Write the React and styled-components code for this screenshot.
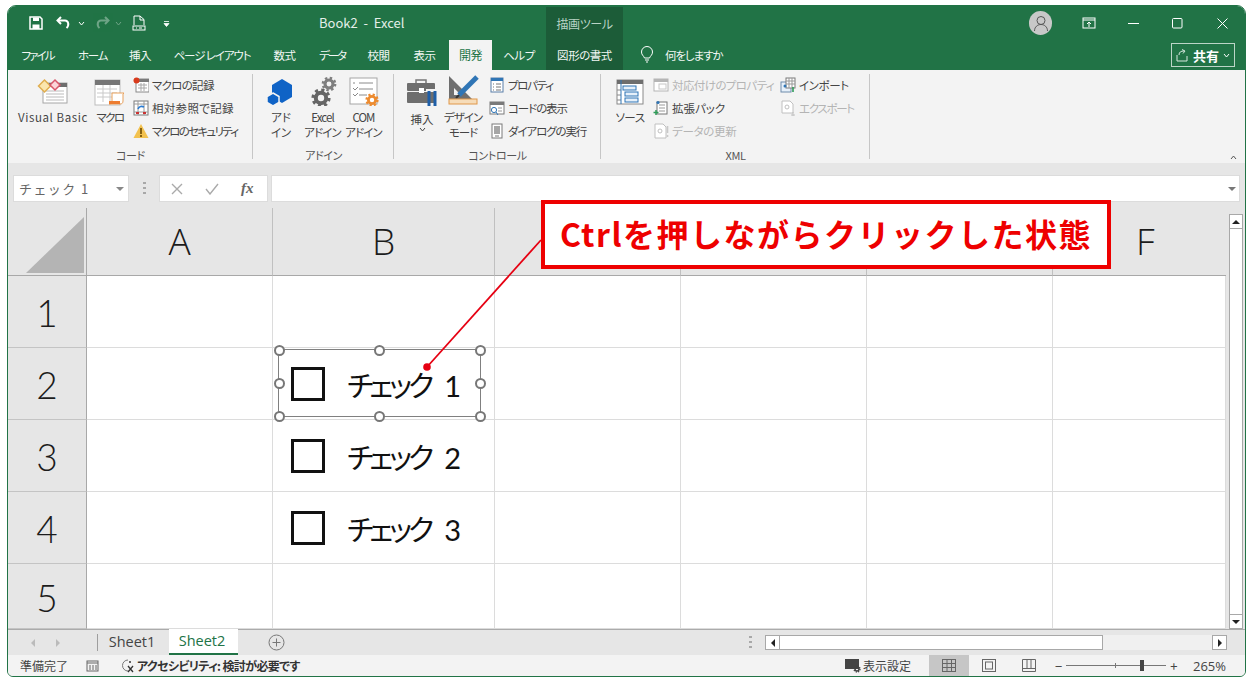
import React from "react";
import styled, { createGlobalStyle } from "styled-components";

const Global = createGlobalStyle`
    html, body { margin: 0; padding: 0; background: #fff; }
    body {
        font-family: "Noto Sans CJK JP", "Noto Sans", sans-serif;
        font-feature-settings: "palt";
        overflow: hidden;
    }
    * { box-sizing: border-box; }
`;

const tabs = [
    ["ファイル", 21, 33, -1.9], ["ホーム", 78, 29, -1.3], ["挿入", 128, 24, -0.45], ["ページ レイアウト", 173, 78, -1.1],
    ["数式", 273, 23, -0.45], ["データ", 318, 28, -2.2], ["校閲", 367, 23, -0.45], ["表示", 413, 23, -0.45],
];

const Svg = ({ w = 16, h = 16, children, vb }) => (
    <svg width={w} height={h} viewBox={vb || `0 0 ${w} ${h}`} fill="none" style={{ flex: "none", display: "block" }}>{children}</svg>
);

/* ---------- ribbon icons ---------- */
const VbIcon = () => (
    <Svg w={32} h={32}>
        <rect x="6" y="9" width="24" height="20" fill="#fff" stroke="#a6a6a6" />
        <rect x="6" y="9" width="24" height="4" fill="#6e6e6e" />
        <path d="M9 17h18M9 20h18M9 23h18M9 26h18" stroke="#bbb" />
        <path d="M1.5 12l6-6 6 6-6 6z" fill="#fbe6ae" stroke="#e0ae50" strokeWidth="1.5" />
        <path d="M13 11l5-5 5 5-5 5z" fill="#fbd4d8" stroke="#d8566a" strokeWidth="1.5" />
    </Svg>
);
const MacroIcon = () => (
    <Svg w={32} h={32}>
        <rect x="1" y="6" width="25" height="25" fill="#fff" stroke="#bdbdbd" />
        <rect x="1" y="6" width="25" height="5" fill="#767676" />
        <path d="M3 15h20M3 19h20M3 23h20M9 11v17M16 11v17" stroke="#c9c9c9" />
        <path d="M18 19h12l-1 1v7c0 2-1 3-3 3H15c2 0 3-1 3-3z" fill="#fff" stroke="#e8a15d" />
        <rect x="15" y="27" width="11" height="3" fill="#ed7d31" />
    </Svg>
);
const RecIcon = () => (
    <Svg>
        <rect x="3" y="2" width="13" height="13" fill="#fff" stroke="#8a8a8a" />
        <rect x="3" y="2" width="13" height="3" fill="#7a7a7a" />
        <path d="M5 8h9M5 11h9M8 6v8M11 6v8" stroke="#a8a8a8" />
        <circle cx="3.5" cy="3.5" r="3" fill="#d83b1c" />
    </Svg>
);
const RelIcon = () => (
    <Svg>
        <rect x="1" y="1" width="14" height="14" fill="#fff" stroke="#7a7a7a" />
        <path d="M1 4h14M5 1v14M11 1v14M1 12h14" stroke="#9a9a9a" />
        <path d="M5 9c1-3 4-3 6-2" stroke="#2b7cd3" strokeWidth="1.6" />
        <path d="M3 13h3M10 13h3" stroke="#c33" strokeWidth="2" />
    </Svg>
);
const WarnIcon = () => (
    <Svg>
        <path d="M8 1l7.5 14H.5z" fill="#f2c14e" />
        <path d="M8 5v6M8 12v2" stroke="#6b4a00" strokeWidth="1.6" />
    </Svg>
);
const AddinIcon = () => (
    <Svg w={32} h={32}>
        <path d="M17 5l10 6v12l-10 6-10-6V11z" fill="#0f63c6" />
        <path d="M8 19l6 3.5v6L8 32l-6-3.5v-6z" fill="#0f63c6" stroke="#f3f3f3" strokeWidth="1.5" />
    </Svg>
);
const Gear = ({ x, y, r, fill }) => (
    <g transform={`translate(${x} ${y})`}>
        <circle r={r * 0.8} fill="none" stroke={fill} strokeWidth={r * 0.62} />
        <circle r={r * 1.2} fill="none" stroke={fill} strokeWidth={r * 0.55} strokeDasharray={`${r * 0.471} ${r * 0.471}`} />
    </g>
);
const GearsIcon = () => (
    <Svg w={32} h={32}>
        <Gear x={22} y={10} r={5} fill="#7f7f7f" />
        <Gear x={14} y={24} r={6.5} fill="#666" />
    </Svg>
);
const ComIcon = () => (
    <Svg w={32} h={32}>
        <rect x="2" y="4" width="27" height="26" fill="#fff" stroke="#a6a6a6" />
        <path d="M5 9h2M11 9h14M5 14l2 2 3-3M11 15h14M5 20l2 2 3-3M11 21h8" stroke="#8a8a8a" />
        <Gear x={24} y={26} r={4.5} fill="#ed8b2f" />
    </Svg>
);
const InsertIcon = () => (
    <Svg w={32} h={34}>
        <path d="M10 10V6h10v4" stroke="#777" strokeWidth="1.5" />
        <rect x="1" y="9" width="28" height="8" rx="1" fill="#6e6e6e" />
        <rect x="1" y="18" width="28" height="11" rx="1" fill="#6e6e6e" />
        <rect x="13" y="14" width="5" height="5" fill="#fff" />
        <path d="M20 16h12" stroke="#f3f3f3" strokeWidth="2" />
        <path d="M23 17v15M29 17v15" stroke="#1f5fa8" strokeWidth="3" />
    </Svg>
);
const DesignIcon = () => (
    <Svg w={32} h={32}>
        <path d="M2 2l24 24H2z M7 14v7h7z" fill="#6e6e6e" fillRule="evenodd" />
        <path d="M12 21L30 3" stroke="#2f75b5" strokeWidth="5" />
        <path d="M12 21l-3 3" stroke="#333" strokeWidth="2" />
        <rect x="2" y="25" width="28" height="5" fill="#f6dcb9" stroke="#e0984a" />
    </Svg>
);
const PropIcon = () => (
    <Svg>
        <rect x="2" y="1" width="12" height="14" fill="#fff" stroke="#5b7fa8" />
        <rect x="2" y="1" width="12" height="3" fill="#2f75b5" />
        <path d="M4 7h1M7 7h5M4 10h1M7 10h5M4 13h1M7 13h5" stroke="#777" />
    </Svg>
);
const CodeIcon = () => (
    <Svg>
        <rect x="1" y="2" width="14" height="12" fill="#fff" stroke="#7a7a7a" />
        <rect x="1" y="2" width="14" height="3" fill="#7a7a7a" />
        <path d="M9 8h4M9 11h4" stroke="#999" />
        <circle cx="5" cy="10" r="2.6" stroke="#2f75b5" fill="#fff" />
        <path d="M7 12l2 3" stroke="#2f75b5" />
    </Svg>
);
const DialogIcon = () => (
    <Svg>
        <rect x="3" y="1" width="10" height="14" fill="#fff" stroke="#7a7a7a" />
        <rect x="5" y="3" width="6" height="8" fill="#a6a6a6" />
        <path d="M6 13h4" stroke="#777" />
    </Svg>
);
const SourceIcon = () => (
    <Svg w={32} h={32}>
        <rect x="3" y="6" width="26" height="24" fill="#fff" stroke="#8a8a8a" />
        <rect x="3" y="6" width="26" height="4" fill="#6e6e6e" />
        <path d="M3 16h4M3 21h4M3 26h4" stroke="#8a8a8a" />
        <rect x="9" y="12" width="13" height="4" fill="#e6f0fa" stroke="#2f75b5" />
        <rect x="11" y="18" width="13" height="4" fill="#e6f0fa" stroke="#2f75b5" />
        <rect x="11" y="24" width="13" height="4" fill="#e6f0fa" stroke="#2f75b5" />
        <path d="M7 6v24" stroke="#2f75b5" />
    </Svg>
);
const DocIcon = ({ c = "#b5b5b5", accent = "#c8c8c8" }) => (
    <Svg>
        <rect x="1" y="2" width="14" height="12" fill="#fff" stroke={c} />
        <rect x="1" y="2" width="14" height="3" fill={c} />
        <rect x="6" y="7" width="7" height="5" fill="#fff" stroke={accent} />
    </Svg>
);
const PackIcon = () => (
    <Svg>
        <rect x="4" y="2" width="10" height="12" fill="#fff" stroke="#777" />
        <path d="M6 5h6M6 8h6M6 11h6" stroke="#999" />
        <circle cx="5" cy="2.5" r="1.6" fill="#2f75b5" />
        <path d="M3 10v5M.5 12.5h5" stroke="#2e9b57" strokeWidth="1.5" />
    </Svg>
);
const ImportIcon = () => (
    <Svg>
        <rect x="1" y="5" width="10" height="10" fill="#e6f0fa" stroke="#6f8cab" />
        <rect x="6" y="1" width="9" height="10" fill="#fff" stroke="#7a7a7a" />
        <path d="M6 4h9M9 1v10M12 1v10M6 7h9" stroke="#999" />
        <path d="M13 15v-5" stroke="#2e9b57" strokeWidth="1.6" />
        <circle cx="5" cy="9" r="1.5" fill="#2f75b5" />
    </Svg>
);
const ExportIcon = () => (
    <Svg>
        <path d="M2 1h8l3 3v9H2z" fill="#fff" stroke="#c0c0c0" />
        <circle cx="7" cy="7" r="2" stroke="#c0c0c0" />
        <path d="M11 15h4M13 12v5" stroke="#c0c0c0" />
    </Svg>
);
const RefreshIcon = () => (
    <Svg>
        <path d="M2 1h8l3 3v11H2z" fill="#fff" stroke="#c0c0c0" />
        <circle cx="7" cy="8" r="2" stroke="#c0c0c0" />
        <path d="M14.5 3v7M14.5 12v2" stroke="#c8c8c8" strokeWidth="1.6" />
    </Svg>
);

/* ---------- layout ---------- */
const Page = styled.div`
    width: 1253px;
    height: 683px;
    padding: 5px 0 0 7px;
`;

const Frame = styled.div`
    position: relative;
    width: 1239px;
    height: 672px;
    display: flex;
    flex-direction: column;
    border: 1px solid #217346;
    border-radius: 9px 9px 6px 6px;
    overflow: hidden;
    background: #f3f3f3;
`;

const TitleBar = styled.div`
    position: relative;
    height: 34px;
    flex: none;
    display: flex;
    align-items: center;
    padding-left: 20px;
    background: #217346;
    color: #fff;
`;

const Qat = styled.div`
    width: 291px;
    display: flex;
    align-items: center;
    flex: none;
`;

const QatSlot = styled.div`
    width: ${p => p.$w}px;
    margin-left: ${p => p.$ml || 0}px;
    flex: none;
    display: flex;
    justify-content: center;
    opacity: ${p => (p.$dim ? 0.35 : 1)};
`;

const DocTitle = styled.div`
    width: 227px;
    flex: none;
    font-size: 13px;
    line-height: 18px;
    color: #e4efe9;
    white-space: pre;
`;

const ToolTitle = styled.div`
    width: 77px;
    height: 33px;
    margin-top: 1px;
    flex: none;
    background: #1c5c38;
    color: #b9d3c5;
    font-size: 12px;
    letter-spacing: -0.4px;
    display: flex;
    align-items: center;
    justify-content: center;
`;

const WinButtons = styled.div`
    margin-left: auto;
    width: 216px;
    display: flex;
    align-items: center;
`;

const Avatar = styled.div`
    width: 24px;
    height: 24px;
    border-radius: 50%;
    background: #c8c8c8;
    display: flex;
    align-items: center;
    justify-content: center;
    margin-right: 14px;
`;

const WinSlot = styled.div`
    width: 46px;
    display: flex;
    justify-content: center;
`;

const TabRow = styled.div`
    position: relative;
    height: 30px;
    flex: none;
    background: #217346;
    display: grid;
    grid-template-columns: 441px 43px 54px 77px 16px 1fr 74px;
    align-items: stretch;
    font-size: 11.5px;
    letter-spacing: -0.45px;
`;

const FileTabs = styled.div`
    display: flex;
    align-items: center;
    padding-left: 13px;
    padding-bottom: 1px;
`;

const TabLabel = styled.span`
    width: ${p => p.$w}px;
    margin-right: ${p => p.$gap}px;
    flex: none;
    color: #f2f7f4;
    letter-spacing: ${p => p.$ls}px;
    white-space: nowrap;
    display: flex;
    justify-content: center;
`;

const ActiveTab = styled.div`
    background: #f3f3f3;
    color: #217346;
    font-size: 12px;
    padding-bottom: 1px;
    display: flex;
    align-items: center;
    justify-content: center;
`;

const HelpTab = styled.div`
    color: #f2f7f4;
    padding-bottom: 1px;
    display: flex;
    align-items: center;
    justify-content: center;
`;

const ToolTab = styled(HelpTab)`
    background: #1c5c38;
`;

const TellMe = styled.div`
    grid-column: 6;
    display: flex;
    align-items: center;
    color: #f2f7f4;
    gap: 11px;
    padding-left: 1px;
    padding-bottom: 1px;
    letter-spacing: -1.1px;
`;

const ShareButton = styled.div`
    grid-column: 7;
    width: 64px;
    height: 24px;
    margin-top: 3px;
    border: 1px solid #bcd5c7;
    color: #fff;
    font-size: 13px;
    font-weight: 700;
    letter-spacing: 0;
    display: flex;
    align-items: center;
    justify-content: center;
    gap: 4px;
`;

const Ribbon = styled.div`
    position: relative;
    height: 93px;
    flex: none;
    display: flex;
    background: #f3f3f3;
    color: #444;
    font-size: 12px;
`;

const Group = styled.div`
    width: ${p => p.$w}px;
    flex: none;
    display: flex;
    flex-direction: column;
    padding-top: 3px;
    position: relative;
    &::after {
        content: "";
        position: absolute;
        right: 0;
        top: 4px;
        bottom: 4px;
        width: 1px;
        background: #c6c6c6;
    }
`;

const GroupBody = styled.div`
    height: 72px;
    flex: none;
    display: flex;
    padding-left: ${p => p.$pad || 0}px;
`;

const GroupName = styled.div`
    height: 18px;
    font-size: 11px;
    letter-spacing: -0.4px;
    color: #555;
    text-align: center;
    line-height: 20px;
`;

const BigButton = styled.div`
    width: ${p => p.$w}px;
    flex: none;
    display: flex;
    flex-direction: column;
    align-items: center;
    padding-top: 1px;
    line-height: 15px;
    font-size: 11.5px;
    text-align: center;
    white-space: pre;
`;

const BigLabel = styled.div`
    margin-top: 4px;
    letter-spacing: ${p => p.$ls || 0}px;
`;

const SmallColumn = styled.div`
    width: ${p => p.$w}px;
    margin-left: ${p => p.$ml || 0}px;
    flex: none;
    display: flex;
    flex-direction: column;
`;

const SmallButton = styled.div`
    height: 23px;
    display: flex;
    align-items: center;
    gap: 3px;
    white-space: nowrap;
    font-size: 11.5px;
    letter-spacing: ${p => p.$ls || 0}px;
    color: ${p => (p.$off ? "#b4b4b4" : "#444")};
`;

const Collapse = styled.div`
    position: absolute;
    right: 8px;
    bottom: 3px;
`;

const FormulaBar = styled.div`
    height: 45px;
    flex: none;
    background: #e6e6e6;
    display: flex;
    padding: 12px 5px 6px 5px;
`;

const NameBox = styled.div`
    width: 116px;
    background: #fff;
    border: 1px solid #dcdcdc;
    display: flex;
    align-items: center;
    justify-content: space-between;
    padding: 0 3px 0 5px;
    color: #666;
    font-size: 13px;
    letter-spacing: 1.4px;
    font-feature-settings: normal;
`;

const Grip = styled.div`
    width: 30px;
    display: flex;
    align-items: center;
    justify-content: center;
`;

const FxBox = styled.div`
    width: 109px;
    background: #fff;
    border: 1px solid #dcdcdc;
    display: flex;
    align-items: center;
    color: #aaa;
    padding-left: 11px;
    gap: 22px;
`;

const FxText = styled.span`
    font-family: "Liberation Serif", serif;
    font-style: italic;
    font-weight: 700;
    font-size: 15px;
    color: #666;
`;

const FormulaInput = styled.div`
    flex: 1;
    margin-left: 3px;
    background: #fff;
    border: 1px solid #dcdcdc;
    display: flex;
    align-items: center;
    justify-content: flex-end;
    padding-right: 2px;
`;

const SheetArea = styled.div`
    position: relative;
    height: 421px;
    flex: none;
    display: flex;
    background: #e6e6e6;
`;

const Grid = styled.div`
    width: 1218px;
    flex: none;
    display: grid;
    grid-template-columns: 79px 186px 222px 186px 186px 186px 173px;
    grid-template-rows: 68px 72px 72px 72px 72px 65px;
    overflow: hidden;
`;

const Corner = styled.div`
    position: relative;
    border-right: 1px solid #a8a8a8;
    border-bottom: 1px solid #a8a8a8;
    display: flex;
    align-items: flex-end;
    justify-content: flex-end;
    padding: 0 2px 2px 0;
`;

const ColHead = styled.div`
    border-right: 1px solid #c0c0c0;
    border-bottom: 1px solid #a8a8a8;
    display: flex;
    align-items: center;
    justify-content: center;
    font-family: "Open Sans", "Noto Sans", sans-serif;
    font-weight: 300;
    font-size: 37px;
    color: #1c1c1c;
    padding-bottom: 2px;
`;

const LastHead = styled(ColHead)`
    border-right: none;
    justify-content: flex-start;
    padding-left: 83px;
`;

const RowHead = styled.div`
    background: #e6e6e6;
    border-right: 1px solid #a8a8a8;
    border-bottom: 1px solid #c4c4c4;
    display: flex;
    align-items: center;
    justify-content: center;
    font-family: "Lato", "Open Sans", sans-serif;
    font-weight: 300;
    font-size: 37px;
    color: #1c1c1c;
    padding-top: 2px;
`;

const Cell = styled.div`
    position: relative;
    z-index: ${p => (p.$raised ? 2 : 0)};
    background: #fff;
    border-right: 1px solid #dcdcdc;
    border-bottom: 1px solid #dcdcdc;
    display: flex;
    align-items: center;
    padding-left: 18px;
`;

const CheckBox = styled.span`
    width: 34px;
    height: 34px;
    flex: none;
    border: 3px solid #111;
`;

const CheckLabel = styled.span`
    margin-left: 22px;
    font-size: 29px;
    color: #111;
    white-space: nowrap;
    letter-spacing: -4px;
`;

const CheckNum = styled.span`
    font-family: "Lato", sans-serif;
    font-weight: 400;
    letter-spacing: 0;
    margin-left: 14px;
`;

const Selection = styled.div`
    position: absolute;
    left: 5px;
    top: 1px;
    width: 203px;
    height: 68px;
    border: 1px solid #808080;
`;

const Handle = styled.i`
    position: absolute;
    left: ${p => p.$x}%;
    top: ${p => p.$y}%;
    width: 11px;
    height: 11px;
    margin: -5.5px 0 0 -5.5px;
    border-radius: 50%;
    border: 2px solid #777;
    background: #fff;
`;

const Leader = styled.svg`
    position: absolute;
    left: 0;
    top: 0;
    z-index: 3;
    width: 1237px;
    height: 421px;
    pointer-events: none;
`;

const Callout = styled.div`
    position: absolute;
    left: 533px;
    top: -8px;
    z-index: 4;
    width: 570px;
    height: 69px;
    padding-bottom: 3px;
    background: #fff;
    border: 4px solid #ee0000;
    color: #ee0000;
    display: flex;
    align-items: center;
    justify-content: center;
    font-size: 32px;
    font-weight: 700;
    white-space: nowrap;
    font-feature-settings: normal;
    letter-spacing: 1.5px;
`;

const VScroll = styled.div`
    flex: 1;
    display: flex;
    flex-direction: column;
    padding: 6px 2px 0 3px;
`;

const ScrollBtn = styled.div`
    height: 15px;
    flex: none;
    background: #fff;
    border: 1px solid #a8a8a8;
    display: flex;
    align-items: center;
    justify-content: center;
`;

const VThumb = styled.div`
    flex: 1;
    background: #fff;
    border-left: 1px solid #a8a8a8;
    border-right: 1px solid #a8a8a8;
`;

const SheetTabs = styled.div`
    height: 26px;
    flex: none;
    background: #e6e6e6;
    border-top: 1px solid #ababab;
    display: flex;
    align-items: stretch;
    font-size: 14.5px;
`;

const TabNav = styled.div`
    width: 90px;
    flex: none;
    display: flex;
    align-items: center;
    padding-left: 23px;
    gap: 19px;
    border-right: 1px solid #9e9e9e;
    margin: 4px 0;
`;

const SheetName = styled.div`
    width: 71px;
    flex: none;
    display: flex;
    align-items: center;
    justify-content: center;
    font-family: "Open Sans", sans-serif;
    color: #444;
    padding: 0 3px 2px 0;
`;

const SheetActive = styled(SheetName)`
    width: 69px;
    background: #fff;
    color: #217346;
    border-bottom: 2px solid #217346;
    margin-top: -1px;
    padding-bottom: 1px;
`;

const AddSheet = styled.div`
    width: 76px;
    flex: none;
    display: flex;
    align-items: center;
    justify-content: center;
`;

const HGrip = styled.div`
    margin-left: 421px;
    width: 30px;
    flex: none;
    display: flex;
    align-items: center;
    justify-content: center;
`;

const HScroll = styled.div`
    width: 462px;
    flex: none;
    display: flex;
    align-items: center;
`;

const HBtn = styled.div`
    width: 15px;
    height: 15px;
    flex: none;
    background: #fff;
    border: 1px solid #a8a8a8;
    display: flex;
    align-items: center;
    justify-content: center;
`;

const HThumb = styled.div`
    width: 323px;
    height: 15px;
    flex: none;
    background: #fff;
    border: 1px solid #a8a8a8;
    border-left: none;
`;

const HTrack = styled.div`
    flex: 1;
    height: 15px;
    background: #f0f0f0;
`;

const StatusBar = styled.div`
    flex: 1;
    display: flex;
    align-items: center;
    background: #f3f3f3;
    color: #444;
    font-size: 12px;
    padding-left: 12px;
`;

const StatusBold = styled.span`
    font-weight: 700;
    margin-left: 0;
    color: #333;
    letter-spacing: -0.65px;
`;

const StatusRight = styled.div`
    margin-left: auto;
    height: 100%;
    display: flex;
    align-items: center;
    flex: none;
`;

const ViewSettings = styled.div`
    width: 84px;
    flex: none;
    display: flex;
    align-items: center;
    gap: 0;
`;

const ViewBtn = styled.div`
    width: 40px;
    flex: none;
    height: 100%;
    display: flex;
    align-items: center;
    justify-content: center;
    background: ${p => (p.$on ? "#c6c6c6" : "transparent")};
`;

const Zoom = styled.div`
    margin-left: 6px;
    width: 138px;
    flex: none;
    display: flex;
    align-items: center;
    font-size: 13px;
    gap: 4px;
`;

const Slider = styled.div`
    position: relative;
    width: 100px;
    height: 1px;
    flex: none;
    background: #777;
`;

const Tick = styled.i`
    position: absolute;
    left: 49px;
    top: -2px;
    width: 1px;
    height: 5px;
    background: #777;
`;

const Thumb = styled.i`
    position: absolute;
    left: 74px;
    top: -5px;
    width: 4px;
    height: 11px;
    background: #444;
`;

const Percent = styled.div`
    width: 52px;
    flex: none;
    font-size: 13px;
    font-family: "Open Sans", sans-serif;
    white-space: nowrap;
`;

/* ---------- small glyphs ---------- */
const Chev = ({ c = "#fff", up }) => (
    <Svg w={7} h={5}><path d={up ? "M1 4l2.5-3L6 4" : "M1 1l2.5 3L6 1"} stroke={c} /></Svg>
);
const Tri = ({ dir, c = "#222" }) => {
    const d = { up: "M1 6l4-4 4 4z", down: "M1 2l4 4 4-4z", left: "M7 1L3 5l4 4z", right: "M3 1l4 4-4 4z" }[dir];
    return <Svg w={10} h={dir === "up" || dir === "down" ? 8 : 10}><path d={d} fill={c} /></Svg>;
};
const Dots = () => (
    <Svg w={3} h={14}><path d="M0 1h3M0 6h3M0 11h3" stroke="#a8a8a8" strokeWidth="2" /></Svg>
);

const CheckRow = ({ n, selected }) => (
    <Cell $raised={selected}>
        {selected && (
            <Selection>
                {[[0, 0], [50, 0], [100, 0], [0, 50], [100, 50], [0, 100], [50, 100], [100, 100]].map(([x, y]) => (
                    <Handle key={`${x}-${y}`} $x={x} $y={y} />
                ))}
            </Selection>
        )}
        <CheckBox />
        <CheckLabel>チェック<CheckNum>{n}</CheckNum></CheckLabel>
    </Cell>
);

const Row = ({ n, check, selected }) => (
    <>
        <RowHead>{n}</RowHead>
        <Cell />
        {check ? <CheckRow n={check} selected={selected} /> : <Cell />}
        <Cell />
        <Cell />
        <Cell />
        <Cell />
    </>
);

const App = () => (
    <Page>
        <Global />
        <Frame>
            <TitleBar>
                <Qat>
                    <QatSlot $w={16}>
                        <Svg w={14} h={14}>
                            <path d="M1 1h10l2 2v10H1z" stroke="#fff" strokeWidth="1.5" />
                            <path d="M4 1.5h6v3.5H4zM3.5 8.5h7V13h-7z" fill="#fff" />
                        </Svg>
                    </QatSlot>
                    <QatSlot $w={26} $ml={7}>
                        <Svg w={16} h={14}>
                            <path d="M5 1L1.5 4.5 5 8" stroke="#fff" strokeWidth="2" />
                            <path d="M2 4.5h7c3.5 0 4.5 5 1.5 7.5" stroke="#fff" strokeWidth="2" />
                        </Svg>
                    </QatSlot>
                    <QatSlot $w={8}><Chev /></QatSlot>
                    <QatSlot $w={26} $ml={4} $dim>
                        <Svg w={16} h={14}>
                            <path d="M11 1l3.5 3.5L11 8" stroke="#fff" strokeWidth="2" />
                            <path d="M14 4.5H7C3.5 4.5 2.5 9.5 5.5 12" stroke="#fff" strokeWidth="2" />
                        </Svg>
                    </QatSlot>
                    <QatSlot $w={7} $dim><Chev /></QatSlot>
                    <QatSlot $w={34}>
                        <Svg w={14} h={16}>
                            <path d="M2 10V1h6l4 3.5V10M8 1v4h4" stroke="#fff" />
                            <rect x="1" y="11" width="12" height="4" stroke="#fff" />
                            <path d="M4 13h1M7 13h3" stroke="#fff" />
                        </Svg>
                    </QatSlot>
                    <QatSlot $w={20}>
                        <Svg w={7} h={7}><path d="M1 1.5h5M1 3.5l2.5 3 2.5-3z" stroke="#fff" fill="#fff" strokeWidth=".8" /></Svg>
                    </QatSlot>
                </Qat>
                <DocTitle>Book2  -  Excel</DocTitle>
                <ToolTitle>描画ツール</ToolTitle>
                <WinButtons>
                    <Avatar>
                        <Svg w={18} h={18}>
                            <circle cx="9" cy="6.5" r="4" stroke="#555" />
                            <path d="M2.5 17c0-4 3-6.5 6.5-6.5s6.5 2.5 6.5 6.5" stroke="#555" />
                        </Svg>
                    </Avatar>
                    <WinSlot>
                        <Svg w={14} h={12}>
                            <rect x="1" y="1" width="12" height="10" stroke="#fff" />
                            <path d="M1 3h12" stroke="#fff" />
                            <path d="M7 10V5M5 7l2-2 2 2" stroke="#fff" />
                        </Svg>
                    </WinSlot>
                    <WinSlot><Svg w={11} h={11}><path d="M0 5.5h11" stroke="#fff" /></Svg></WinSlot>
                    <WinSlot><Svg w={11} h={11}><rect x=".5" y=".5" width="9.5" height="9.5" rx="1" stroke="#fff" /></Svg></WinSlot>
                    <WinSlot><Svg w={11} h={11}><path d="M.5.5l10 10M10.5.5l-10 10" stroke="#fff" /></Svg></WinSlot>
                </WinButtons>
            </TitleBar>

            <TabRow>
                <FileTabs>
                    {tabs.map(([t, x, w, ls], i) => (
                        <TabLabel key={t} $w={w} $ls={ls} $gap={i < tabs.length - 1 ? tabs[i + 1][1] - x - w : 0}>{t}</TabLabel>
                    ))}
                </FileTabs>
                <ActiveTab>開発</ActiveTab>
                <HelpTab>ヘルプ</HelpTab>
                <ToolTab>図形の書式</ToolTab>
                <TellMe>
                    <Svg w={14} h={17}>
                        <path d="M4.5 12C3.5 9.5 1.5 9 1.5 6a5.5 5.5 0 0 1 11 0c0 3-2 3.5-3 6z" stroke="#fff" />
                        <path d="M5 14h4M6 16h2" stroke="#fff" />
                    </Svg>
                    何をしますか
                </TellMe>
                <ShareButton>
                    <Svg w={13} h={13}>
                        <path d="M1 6v6h10V7M3 6c0-3 2-4 5-4M6 .5L9 2 7 4.5" stroke="#d8e8df" />
                    </Svg>
                    共有
                    <Chev />
                </ShareButton>
            </TabRow>

            <Ribbon>
                <Group $w={245}>
                    <GroupBody $pad={8}>
                        <BigButton $w={74}><VbIcon /><BigLabel $ls={0.6}>Visual Basic</BigLabel></BigButton>
                        <BigButton $w={40}><MacroIcon /><BigLabel $ls={-1.6}>マクロ</BigLabel></BigButton>
                        <SmallColumn $w={120} $ml={3}>
                            <SmallButton $ls={-0.7}><RecIcon />マクロの記録</SmallButton>
                            <SmallButton $ls={0.3}><RelIcon />相対参照で記録</SmallButton>
                            <SmallButton $ls={-1.7}><WarnIcon />マクロのセキュリティ</SmallButton>
                        </SmallColumn>
                    </GroupBody>
                    <GroupName>コード</GroupName>
                </Group>
                <Group $w={141}>
                    <GroupBody $pad={7}>
                        <BigButton $w={42}><AddinIcon /><BigLabel>{"アド\nイン"}</BigLabel></BigButton>
                        <BigButton $w={41}><GearsIcon /><BigLabel $ls={-0.9}>{"Excel\nアドイン"}</BigLabel></BigButton>
                        <BigButton $w={41}><ComIcon /><BigLabel $ls={-0.9}>{"COM\nアドイン"}</BigLabel></BigButton>
                    </GroupBody>
                    <GroupName>アドイン</GroupName>
                </Group>
                <Group $w={207}>
                    <GroupBody $pad={7}>
                        <BigButton $w={42}><InsertIcon /><BigLabel>挿入</BigLabel><Chev c="#444" /></BigButton>
                        <BigButton $w={40}><DesignIcon /><BigLabel $ls={-1}>{"デザイン\nモード"}</BigLabel></BigButton>
                        <SmallColumn $w={110} $ml={6}>
                            <SmallButton $ls={-1.3}><PropIcon />プロパティ</SmallButton>
                            <SmallButton $ls={-1.1}><CodeIcon />コードの表示</SmallButton>
                            <SmallButton $ls={-1.1}><DialogIcon />ダイアログの実行</SmallButton>
                        </SmallColumn>
                    </GroupBody>
                    <GroupName>コントロール</GroupName>
                </Group>
                <Group $w={269}>
                    <GroupBody $pad={9}>
                        <BigButton $w={40}><SourceIcon /><BigLabel $ls={-0.5}>ソース</BigLabel></BigButton>
                        <SmallColumn $w={127} $ml={3}>
                            <SmallButton $off $ls={-0.6}><DocIcon />対応付けのプロパティ</SmallButton>
                            <SmallButton><PackIcon />拡張パック</SmallButton>
                            <SmallButton $off $ls={-0.3}><RefreshIcon />データの更新</SmallButton>
                        </SmallColumn>
                        <SmallColumn $w={80}>
                            <SmallButton $ls={-0.4}><ImportIcon />インポート</SmallButton>
                            <SmallButton $off $ls={-1.3}><ExportIcon />エクスポート</SmallButton>
                        </SmallColumn>
                    </GroupBody>
                    <GroupName>XML</GroupName>
                </Group>
                <Collapse><Chev c="#555" up /></Collapse>
            </Ribbon>

            <FormulaBar>
                <NameBox>チェック 1<Tri dir="down" c="#888" /></NameBox>
                <Grip><Dots /></Grip>
                <FxBox>
                    <Svg w={12} h={12}><path d="M1 1l10 10M11 1L1 11" stroke="#aaa" strokeWidth="1.4" /></Svg>
                    <Svg w={14} h={12}><path d="M1 6l4 5 8-10" stroke="#aaa" strokeWidth="1.4" /></Svg>
                    <FxText>fx</FxText>
                </FxBox>
                <FormulaInput><Tri dir="down" c="#777" /></FormulaInput>
            </FormulaBar>

            <SheetArea>
                <Grid>
                    <Corner>
                        <Svg w={58} h={56}><path d="M58 0v56H0z" fill="#b4b4b4" /></Svg>
                    </Corner>
                    <ColHead>A</ColHead>
                    <ColHead>B</ColHead>
                    <ColHead />
                    <ColHead />
                    <ColHead />
                    <LastHead>F</LastHead>
                    <Row n={1} />
                    <Row n={2} check={1} selected />
                    <Row n={3} check={2} />
                    <Row n={4} check={3} />
                    <Row n={5} />
                </Grid>
                <VScroll>
                    <ScrollBtn><Tri dir="up" /></ScrollBtn>
                    <VThumb />
                    <ScrollBtn><Tri dir="down" /></ScrollBtn>
                </VScroll>
                <Leader viewBox="0 0 1237 421">
                    <path d="M533 32L419 159" stroke="#e60012" strokeWidth="1.8" />
                    <circle cx="419" cy="159" r="3.8" fill="#e60012" />
                </Leader>
                <Callout>Ctrlを押しながらクリックした状態</Callout>
            </SheetArea>

            <SheetTabs>
                <TabNav>
                    <Svg w={5} h={8}><path d="M4 0L0 4l4 4z" fill="#bbb" /></Svg>
                    <Svg w={5} h={8}><path d="M1 0l4 4-4 4z" fill="#bbb" /></Svg>
                </TabNav>
                <SheetName>Sheet1</SheetName>
                <SheetActive>Sheet2</SheetActive>
                <AddSheet>
                    <Svg w={17} h={17}>
                        <circle cx="8.5" cy="8.5" r="7.5" stroke="#777" />
                        <path d="M4.5 8.5h8M8.5 4.5v8" stroke="#777" />
                    </Svg>
                </AddSheet>
                <HGrip><Dots /></HGrip>
                <HScroll>
                    <HBtn><Tri dir="left" /></HBtn>
                    <HThumb />
                    <HTrack />
                    <HBtn><Tri dir="right" /></HBtn>
                </HScroll>
            </SheetTabs>

            <StatusBar>
                準備完了
                <Svg w={52} h={14} vb="-19 0 52 14">
                    <rect x="0" y="2" width="11" height="10" stroke="#666" />
                    <path d="M0 4h11M3 6v5M6 6v5M9 6v5" stroke="#666" />
                </Svg>
                <Svg w={17} h={15}>
                    <path d="M8 2a5.5 5.5 0 1 0 0 11" stroke="#777" />
                    <path d="M8 8l5 6M13 8l-5 6" stroke="#333" strokeWidth="1.3" />
                    <circle cx="10" cy="4" r="1" fill="#333" />
                </Svg>
                <StatusBold>アクセシビリティ: 検討が必要です</StatusBold>
                <StatusRight>
                    <ViewSettings>
                        <Svg w={18} h={15}>
                            <rect x="0" y="1" width="14" height="10" fill="#444" />
                            <Gear x={12} y={11} r={2.5} fill="#444" />
                        </Svg>
                        表示設定
                    </ViewSettings>
                    <ViewBtn $on>
                        <Svg w={14} h={13}>
                            <rect x=".5" y=".5" width="13" height="12" stroke="#666" />
                            <path d="M.5 4.5h13M.5 8.5h13M5 .5v12M9.5.5v12" stroke="#666" />
                        </Svg>
                    </ViewBtn>
                    <ViewBtn>
                        <Svg w={14} h={13}>
                            <rect x=".5" y=".5" width="13" height="12" stroke="#666" />
                            <rect x="3.5" y="3" width="7" height="7" stroke="#666" />
                        </Svg>
                    </ViewBtn>
                    <ViewBtn>
                        <Svg w={14} h={13}>
                            <path d="M.5 9.5h13M.5.5v12h13V.5M5 .5v9M9 .5v9M.5.5h13" stroke="#666" />
                        </Svg>
                    </ViewBtn>
                    <Zoom>
                        −
                        <Slider><Tick /><Thumb /></Slider>
                        +
                    </Zoom>
                    <Percent>265%</Percent>
                </StatusRight>
            </StatusBar>
        </Frame>
    </Page>
);

export default App;
